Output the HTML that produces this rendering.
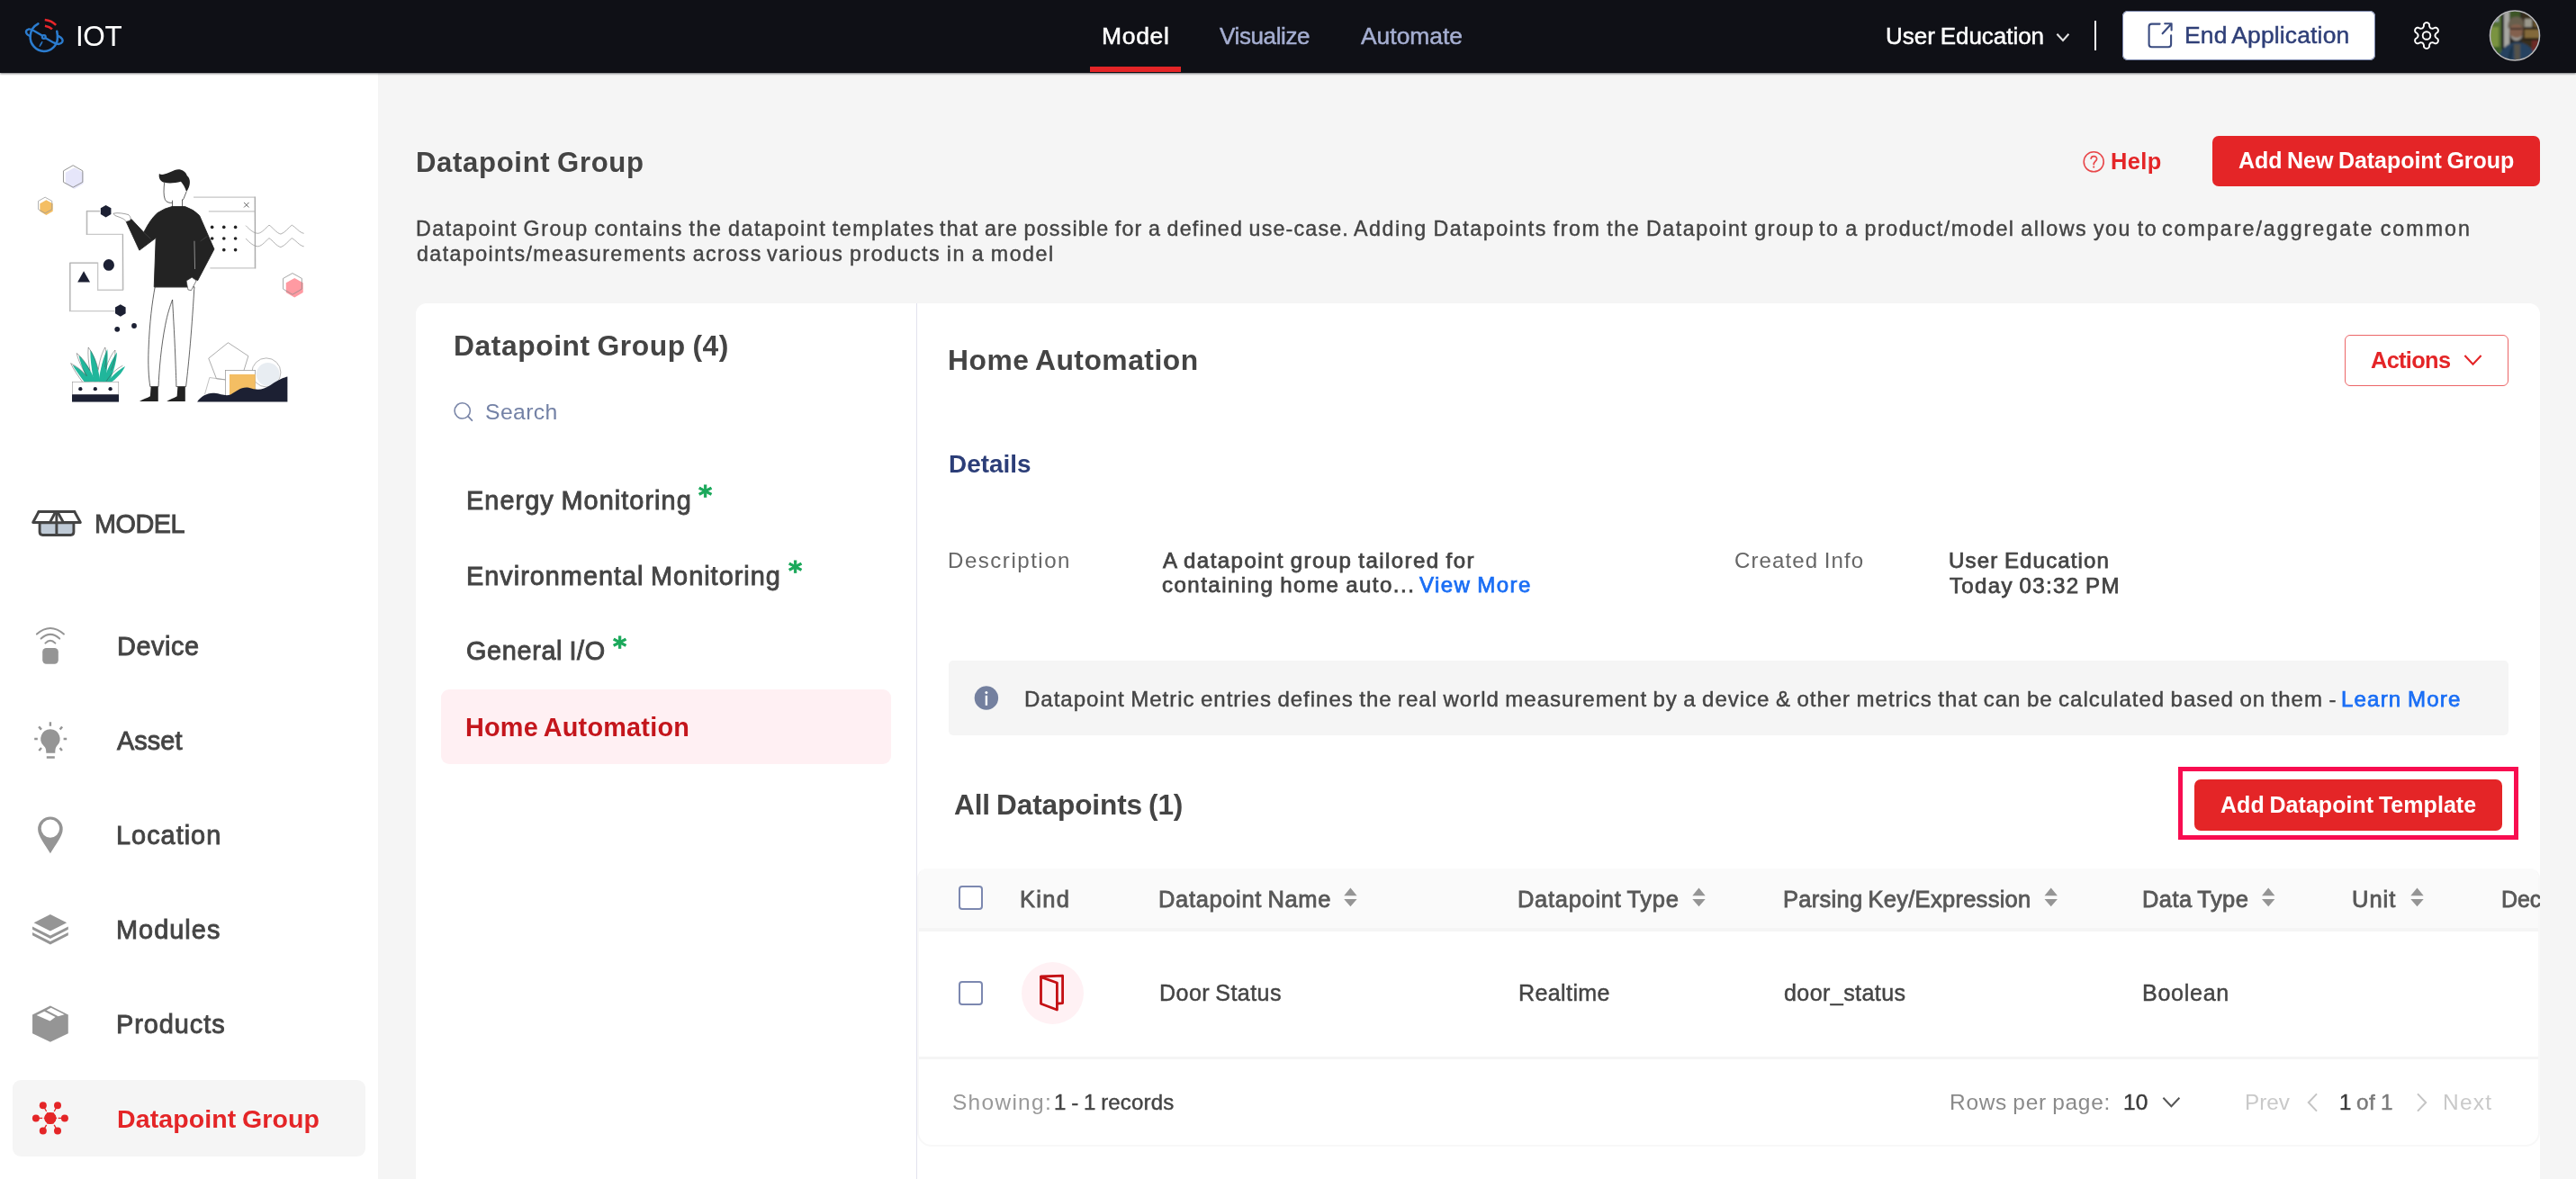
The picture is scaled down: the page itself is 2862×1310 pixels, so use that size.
<!DOCTYPE html><html lang="en"><head><meta charset="utf-8"><title>IOT - Datapoint Group</title><style>
html,body{margin:0;padding:0;background:#f5f5f5;}
body{width:2862px;height:1310px;overflow:hidden;font-family:"Liberation Sans",Arial,sans-serif;}
#root{position:relative;width:2862px;height:1310px;overflow:hidden;background:#f5f5f5;}
.a{position:absolute;}
.t{position:absolute;white-space:nowrap;line-height:1;will-change:transform;}
svg{position:absolute;overflow:visible;}

</style></head><body><div id="root">
<!-- main surfaces -->
<div class="a" style="left:0;top:81px;width:420px;height:1229px;background:#fff;"></div>
<div class="a" style="left:0;top:0;width:2862px;height:80.6px;background:#0f1016;box-shadow:0 0.5px 2px rgba(15,16,22,.55);"></div>
<div class="a" style="left:1211px;top:73.6px;width:101px;height:6px;background:#e42527;"></div>
<!-- header right -->
<div class="a" style="left:2327px;top:23px;width:2.2px;height:33px;background:#fff;"></div>
<div class="a" style="left:2358px;top:12px;width:281px;height:54.5px;background:#fff;border-radius:6px;box-shadow:inset 0 0 0 1px #7a86ad;"></div>
<!-- sidebar selected -->
<div class="a" style="left:14px;top:1200px;width:392px;height:85px;background:#f5f5f5;border-radius:9px;"></div>
<!-- top-right button -->
<div class="a" style="left:2458px;top:151px;width:364px;height:56px;background:#e42527;border-radius:7px;"></div>
<!-- card -->
<div class="a" style="left:462px;top:337px;width:2360px;height:1000px;background:#fff;border-radius:12px;"></div>
<div class="a" style="left:1017.7px;top:337px;width:1.4px;height:973px;background:#e2e2ee;"></div>
<div class="a" style="left:490px;top:766px;width:500px;height:83px;background:#fff0f3;border-radius:9px;"></div>
<!-- actions -->
<div class="a" style="left:2605px;top:372px;width:182px;height:57px;box-sizing:border-box;border:1.6px solid #ec6668;border-radius:6px;background:#fff;"></div>
<!-- info banner -->
<div class="a" style="left:1054px;top:734px;width:1733px;height:83px;background:#f5f5f5;border-radius:5px;"></div>
<!-- highlight + button -->
<div class="a" style="left:2420px;top:852px;width:378px;height:81px;box-sizing:border-box;border:5px solid #f80d50;"></div>
<div class="a" style="left:2438px;top:866px;width:342.2px;height:56.5px;background:#e42527;border-radius:7px;"></div>
<!-- table -->
<div class="a" style="left:1019px;top:964.5px;width:1803px;height:309.5px;border:2px solid #f8f8f8;border-top:0;border-radius:11px 11px 16px 16px;box-sizing:border-box;background:#fff;overflow:hidden;">
  <div class="a" style="left:-2px;top:0;width:1834px;height:66.5px;background:#fafafa;"></div>
  <div class="a" style="left:-2px;top:66.5px;width:1834px;height:4px;background:#f5f5f5;"></div>
  <div class="a" style="left:-2px;top:209px;width:1834px;height:3.6px;background:#f5f5f5;"></div>
</div>
<!-- checkboxes -->
<div class="a" style="left:1065px;top:984px;width:23px;height:23px;border:2px solid #7c88b0;border-radius:4px;background:#fff;"></div>
<div class="a" style="left:1065px;top:1090px;width:23px;height:23px;border:2px solid #7c88b0;border-radius:4px;background:#fff;"></div>
<div class="a" style="left:1134.5px;top:1069px;width:69px;height:69px;border-radius:50%;background:#fff1f4;"></div>

<!-- sidebar illustration -->
<svg style="left:0;top:150px" width="440" height="360" viewBox="0 150 440 360">
<g transform="translate(30 170) scale(0.15267)">
  <!-- hexagons -->
  <polygon points="345,107 410,143 410,222 345,262 280,222 280,143" fill="#e6e6fa"/>
  <polygon points="335,90 405,130 405,212 335,250 265,212 265,130" fill="none" stroke="#8a8a8a" stroke-width="6"/>
  <polygon points="140,342 188,368 188,424 140,452 94,424 94,368" fill="#f4be63"/>
  <polygon points="132,322 182,350 182,410 132,438 82,410 82,350" fill="none" stroke="#9a9a9a" stroke-width="5"/>
  <!-- connector lines -->
  <path d="M530,425 L437,425 L437,592 L697,592 L697,997 L515,997 L515,800 L315,800 L315,1150 L640,1150" fill="none" stroke="#c9c9c9" stroke-width="9" stroke-linejoin="miter"/>
  <path d="M530,421 L433,421 L433,596 M697,592 L701,997 M515,800 L311,800 L311,1154" fill="none" stroke="#8c8c8c" stroke-width="3"/>
  <polygon points="574,380 612,402 612,446 574,468 536,446 536,402" fill="#1c2033"/>
  <ellipse cx="595" cy="815" rx="40" ry="42" fill="#1c2033"/>
  <polygon points="413,860 459,940 368,940" fill="#1c2033"/>
  <polygon points="680,1102 718,1124 718,1168 680,1190 642,1168 642,1124" fill="#1c2033"/>
</g>
<g transform="translate(170 170) scale(0.15267)">
  <!-- window -->
  <path d="M295,322 L742,322 L742,838 L415,838 M405,425 L742,425" fill="none" stroke="#c6c6c6" stroke-width="9"/>
  <path d="M742,318 L746,842" fill="none" stroke="#777" stroke-width="3"/>
  <path d="M662,360 L698,396 M698,360 L662,396" stroke="#555" stroke-width="6" fill="none"/>
  <g fill="#222"><circle cx="430" cy="540" r="12"/><circle cx="516" cy="540" r="12"/><circle cx="600" cy="540" r="12"/>
  <circle cx="430" cy="622" r="12"/><circle cx="516" cy="622" r="12"/><circle cx="600" cy="622" r="12"/>
  <circle cx="516" cy="705" r="12"/><circle cx="600" cy="705" r="12"/></g>
  <path d="M675,528 C 705,560 735,585 765,585 C 795,580 820,545 845,525 C 870,540 900,585 930,590 C 960,580 985,545 1010,525 C 1040,540 1065,580 1098,585" fill="none" stroke="#999" stroke-width="5"/>
  <path d="M675,623 C 705,655 735,680 765,680 C 795,675 820,640 845,620 C 870,635 900,680 930,685 C 960,675 985,640 1010,620 C 1040,635 1065,675 1098,680" fill="none" stroke="#999" stroke-width="5"/>
  <!-- pink hex -->
  <polygon points="1030,910 1092,945 1092,1015 1030,1052 968,1015 968,945" fill="#ff9aa2"/>
  <polygon points="1015,875 1083,913 1083,990 1015,1030 947,990 947,913" fill="none" stroke="#8a8a8a" stroke-width="5"/>
</g>
<g transform="translate(60 320) scale(0.15267)">
  <!-- small dots -->
  <circle cx="460" cy="300" r="19" fill="#1c2033"/><circle cx="583" cy="275" r="19" fill="#1c2033"/>
  <!-- plant -->
  <g fill="#21b69b">
    <path d="M225,690 C 190,640 150,590 135,560 C 180,580 230,620 262,685 Z"/>
    <path d="M250,685 C 215,610 190,540 180,490 C 225,530 270,600 300,680 Z"/>
    <path d="M290,685 C 275,600 262,510 265,450 C 300,500 325,590 335,680 Z"/>
    <path d="M325,685 C 335,590 360,500 388,445 C 395,520 385,610 372,685 Z"/>
    <path d="M355,685 C 385,600 420,520 458,468 C 455,540 430,620 400,685 Z"/>
    <path d="M385,690 C 420,640 470,595 518,570 C 495,620 450,665 410,690 Z"/>
  </g>
  <g fill="none" stroke="#444" stroke-width="3">
    <path d="M212,690 C 175,640 140,590 122,548 C 165,570 205,600 235,640"/>
    <path d="M240,640 C 200,580 175,520 165,475 C 200,500 235,550 260,600"/>
    <path d="M262,600 C 250,540 245,480 250,432 C 285,480 310,540 320,590"/>
    <path d="M322,600 C 330,530 350,470 372,432 C 385,480 380,530 370,575"/>
    <path d="M375,590 C 395,530 420,480 445,452 C 448,500 435,550 415,600"/>
    <path d="M380,680 C 410,630 450,590 500,565"/>
  </g>
  <rect x="133" y="683" width="337" height="92" fill="#fff" stroke="#999" stroke-width="4"/>
  <rect x="131" y="775" width="341" height="54" fill="#1c2033"/>
  <circle cx="192" cy="735" r="14" fill="#1c2033"/><circle cx="300" cy="735" r="14" fill="#1c2033"/><circle cx="410" cy="735" r="14" fill="#1c2033"/>
  <!-- legs -->
  <path d="M735,-8 C 715,100 695,250 688,450 C 684,550 688,650 700,718 L760,718 C 765,600 780,420 810,270 C 825,190 845,130 862,85 C 868,200 880,400 885,560 C 888,640 890,690 890,718 L960,718 C 975,600 1000,350 1020,10 L1022,-8 Z" fill="#fff" stroke="#333" stroke-width="5"/>
  <path d="M705,718 L758,718 L758,826 L622,826 C 640,812 680,800 700,788 Z" fill="#222"/>
  <path d="M900,718 L955,718 L955,826 L820,826 C 840,812 875,800 895,788 Z" fill="#222"/>
</g>
<g transform="translate(200 320) scale(0.15267)">
  <polygon points="350,398 497,495 440,680 265,660 208,512" fill="#fff" stroke="#777" stroke-width="4"/>
  <path d="M180,775 L215,652 L335,668" fill="none" stroke="#999" stroke-width="4"/>
  <circle cx="628" cy="615" r="105" fill="#fff" stroke="#888" stroke-width="4"/>
  <circle cx="640" cy="628" r="84" fill="#e8edf2"/>
  <rect x="330" y="600" width="218" height="200" fill="#fff" stroke="#999" stroke-width="5"/>
  <rect x="360" y="628" width="188" height="170" fill="#f4be63"/>
  <path d="M125,829 C 150,790 200,760 250,765 C 300,770 330,790 370,775 C 410,750 450,715 500,725 C 560,745 600,745 660,705 C 720,665 760,650 782,645 L782,829 Z" fill="#1c2033"/>
</g>
<g transform="translate(30 170) scale(0.15267)">
  <!-- person upper body -->
  <path d="M1000,215 C 995,260 992,310 1005,340 C 1015,360 1040,365 1058,362 M1160,282 L1140,332 L1130,345 M1058,345 L1058,395 M1130,338 L1130,395" fill="none" stroke="#333" stroke-width="5"/>
  <path d="M962,150 C 985,170 1040,140 1075,125 C 1110,112 1150,125 1165,165 C 1195,190 1190,240 1160,282 C 1150,250 1135,225 1120,208 C 1080,220 1030,222 1000,215 C 975,210 955,185 962,150 Z" fill="#222"/>
  <path d="M1055,390 L1150,390 Q1215,412 1255,455 L1362,700 L1242,928 L1200,905 L1170,940 L1170,975 L925,975 L938,618 L818,708 L722,500 L760,482 L850,578 Q900,478 950,436 Q1000,402 1055,390 Z" fill="#232323" stroke="#232323" stroke-width="6" stroke-linejoin="round"/>
  <path d="M1218,640 L1222,845" stroke="#e8e8e8" stroke-width="3.5" fill="none"/>
  <path d="M850,578 L900,625 M1262,642 L1312,606" stroke="#5a5a5a" stroke-width="3" fill="none"/>
  <path d="M628,440 C 660,432 710,440 740,450 C 755,465 758,480 750,490 L722,500 C 715,480 680,470 640,455 Z" fill="#fff" stroke="#666" stroke-width="4"/>
  <path d="M1160,930 L1200,905 L1232,930 L1195,1000 L1172,995 L1165,960 Z" fill="#fff" stroke="#333" stroke-width="4"/>
</g>
</svg>

<svg style="left:0;top:0" width="2862" height="1310" viewBox="0 0 2862 1310">
<g transform="translate(20 10) scale(0.05089)" fill="none" stroke-linecap="round">
<path d="M440,322 C 350,370 275,470 268,590 C 255,760 390,920 565,922 C 730,922 860,790 862,640 C 864,580 860,530 850,488" stroke="#2b7ccf" stroke-width="50"/>
<path d="M268,592 C 170,560 140,470 230,442 C 270,432 300,448 340,470 L 528,580" stroke="#2b7ccf" stroke-width="46"/>
<path d="M608,640 L 780,735 C 850,770 930,780 968,720 C 990,670 940,620 885,592" stroke="#2b7ccf" stroke-width="46"/>
<circle cx="565" cy="608" r="38" stroke="#2b7ccf" stroke-width="44"/>
<path d="M522,715 C 500,740 475,790 470,822 C 495,800 520,760 530,722 Z" fill="#2b7ccf" stroke="#2b7ccf" stroke-width="16" stroke-linejoin="round"/>
<path d="M585,238 C 680,250 770,290 828,352" stroke="#e8262b" stroke-width="50" stroke-linecap="butt"/>
<path d="M588,368 C 650,378 705,400 745,442" stroke="#e8262b" stroke-width="50" stroke-linecap="butt"/>
</g>
<path d="M2285.4,37.8 L2292,45 L2298.4,37.8" fill="none" stroke="#e2e2e2" stroke-width="2.1"/>
<path d="M2399.6,26.6 H2390.6 Q2387.6,26.6 2387.6,29.6 V49.2 Q2387.6,52.2 2390.6,52.2 H2409.1 Q2412.1,52.2 2412.1,49.2 V39.4 M2402.6,37.3 L2412.2,26.8 M2405.2,26.2 H2412.6 V33.4" fill="none" stroke="#3a4b80" stroke-width="2.1" stroke-linecap="round" stroke-linejoin="round"/>
<path d="M2705.40,39.50 L2705.42,39.83 L2705.50,40.16 L2705.62,40.51 L2705.80,40.88 L2706.04,41.27 L2706.36,41.70 L2706.85,42.20 L2708.13,42.98 L2708.56,43.58 L2708.79,44.15 L2708.89,44.71 L2708.90,45.25 L2708.83,45.76 L2708.69,46.25 L2708.47,46.70 L2708.19,47.11 L2707.84,47.48 L2707.43,47.80 L2706.96,48.06 L2706.42,48.25 L2705.82,48.34 L2705.08,48.27 L2703.76,47.54 L2703.09,47.37 L2702.55,47.31 L2702.09,47.30 L2701.69,47.33 L2701.32,47.39 L2701.00,47.50 L2700.70,47.64 L2700.43,47.83 L2700.17,48.06 L2699.94,48.34 L2699.71,48.68 L2699.49,49.08 L2699.27,49.57 L2699.08,50.25 L2699.05,51.75 L2698.75,52.42 L2698.36,52.90 L2697.94,53.27 L2697.48,53.55 L2697.00,53.74 L2696.50,53.86 L2696.00,53.90 L2695.50,53.86 L2695.00,53.74 L2694.52,53.55 L2694.06,53.27 L2693.64,52.90 L2693.25,52.42 L2692.95,51.75 L2692.92,50.25 L2692.73,49.57 L2692.51,49.08 L2692.29,48.68 L2692.06,48.34 L2691.83,48.06 L2691.57,47.83 L2691.30,47.64 L2691.00,47.50 L2690.68,47.39 L2690.31,47.33 L2689.91,47.30 L2689.45,47.31 L2688.91,47.37 L2688.24,47.54 L2686.92,48.27 L2686.18,48.34 L2685.58,48.25 L2685.04,48.06 L2684.57,47.80 L2684.16,47.48 L2683.81,47.11 L2683.53,46.70 L2683.31,46.25 L2683.17,45.76 L2683.10,45.25 L2683.11,44.71 L2683.21,44.15 L2683.44,43.58 L2683.87,42.98 L2685.15,42.20 L2685.64,41.70 L2685.96,41.27 L2686.20,40.88 L2686.38,40.51 L2686.50,40.16 L2686.58,39.83 L2686.60,39.50 L2686.58,39.17 L2686.50,38.84 L2686.38,38.49 L2686.20,38.12 L2685.96,37.73 L2685.64,37.30 L2685.15,36.80 L2683.87,36.02 L2683.44,35.42 L2683.21,34.85 L2683.11,34.29 L2683.10,33.75 L2683.17,33.24 L2683.31,32.75 L2683.53,32.30 L2683.81,31.89 L2684.16,31.52 L2684.57,31.20 L2685.04,30.94 L2685.58,30.75 L2686.18,30.66 L2686.92,30.73 L2688.24,31.46 L2688.91,31.63 L2689.45,31.69 L2689.91,31.70 L2690.31,31.67 L2690.68,31.61 L2691.00,31.50 L2691.30,31.36 L2691.57,31.17 L2691.83,30.94 L2692.06,30.66 L2692.29,30.32 L2692.51,29.92 L2692.73,29.43 L2692.92,28.75 L2692.95,27.25 L2693.25,26.58 L2693.64,26.10 L2694.06,25.73 L2694.52,25.45 L2695.00,25.26 L2695.50,25.14 L2696.00,25.10 L2696.50,25.14 L2697.00,25.26 L2697.48,25.45 L2697.94,25.73 L2698.36,26.10 L2698.75,26.58 L2699.05,27.25 L2699.08,28.75 L2699.27,29.43 L2699.49,29.92 L2699.71,30.32 L2699.94,30.66 L2700.17,30.94 L2700.43,31.17 L2700.70,31.36 L2701.00,31.50 L2701.32,31.61 L2701.69,31.67 L2702.09,31.70 L2702.55,31.69 L2703.09,31.63 L2703.76,31.46 L2705.08,30.73 L2705.82,30.66 L2706.42,30.75 L2706.96,30.94 L2707.43,31.20 L2707.84,31.52 L2708.19,31.89 L2708.47,32.30 L2708.69,32.75 L2708.83,33.24 L2708.90,33.75 L2708.89,34.29 L2708.79,34.85 L2708.56,35.42 L2708.13,36.02 L2706.85,36.80 L2706.36,37.30 L2706.04,37.73 L2705.80,38.12 L2705.62,38.49 L2705.50,38.84 L2705.42,39.17Z" fill="none" stroke="#fff" stroke-width="1.9" stroke-linejoin="round"/>
<circle cx="2696" cy="39.5" r="4.3" fill="none" stroke="#fff" stroke-width="1.9"/>
<defs><clipPath id="av"><circle cx="2794" cy="39.5" r="27"/></clipPath><filter id="avb" x="-10%" y="-10%" width="120%" height="120%"><feGaussianBlur stdDeviation="0.9"/></filter></defs>
<g clip-path="url(#av)"><g filter="url(#avb)">
<rect x="2760" y="5" width="70" height="70" fill="#33302a"/>
<rect x="2760" y="5" width="20" height="70" fill="#6f9338"/>
<rect x="2762" y="8" width="14" height="16" fill="#cfe2e6"/>
<rect x="2766" y="30" width="10" height="24" fill="#a4c450"/>
<rect x="2764" y="52" width="14" height="18" fill="#4d7a2a"/>
<rect x="2779" y="5" width="3" height="70" fill="#1e2124"/>
<rect x="2782" y="5" width="6" height="48" fill="#e2dfd6"/>
<rect x="2788" y="5" width="12" height="16" fill="#4f6d2d"/>
<rect x="2802" y="12" width="28" height="50" fill="#4a3820"/>
<rect x="2805" y="21" width="8" height="9" fill="#d2ccb8"/><rect x="2815" y="20" width="8" height="10" fill="#8d6a30"/>
<rect x="2805" y="33" width="17" height="9" fill="#b18a46"/><rect x="2813" y="45" width="8" height="14" fill="#93342b"/>
<rect x="2803" y="30.5" width="22" height="1.6" fill="#2a1f12"/><rect x="2803" y="43" width="22" height="1.6" fill="#2a1f12"/>
<path d="M2774,72 C2776,56 2784,49 2794,47 C2806,46 2816,52 2820,72 Z" fill="#31557a"/>
<path d="M2786,72 C2786,60 2789,52 2793,49 L2790,72 Z" fill="#25415f"/>
<path d="M2793,49 L2800,49 L2800,72 L2794,72 Z" fill="#716b5e"/>
<ellipse cx="2795.5" cy="34.5" rx="7.4" ry="10.4" fill="#b07f60"/>
<path d="M2786.5,32 C2785.5,22 2790.5,18.5 2796,18.5 C2802.5,18.5 2805.5,24 2804,32 C2801.5,26 2791.5,25 2786.5,32 Z" fill="#8b7a62"/>
<path d="M2789,38.5 C2790.5,47.5 2801,47.5 2802.8,38.5 C2800,43 2792.5,43 2789,38.5 Z" fill="#d0cabf"/>
<rect x="2789" y="31.4" width="12.8" height="1.5" fill="#2c2622"/>
<rect x="2760" y="5" width="70" height="70" fill="#10141c" opacity="0.28"/>
</g></g>
<circle cx="2794" cy="39.5" r="27.5" fill="none" stroke="#b9b9bb" stroke-width="1.6"/>
<g transform="translate(20 545) scale(0.085404)" stroke="#444" stroke-width="34" stroke-linejoin="round" stroke-linecap="round">
<path d="M282,418 V540 Q282,580 322,580 H685 Q725,580 725,540 V418 Z" fill="#bfcad6"/>
<path d="M270,275 H490 L415,415 H195 Z" fill="#fff"/>
<path d="M512,275 H735 L812,415 H590 Z" fill="#fff"/>
<path d="M270,275 H735 M502,280 V580" fill="none"/>
</g>
<rect x="47.2" y="720" width="17.6" height="17.8" rx="4.2" fill="#959595"/>
<path d="M40.9,704.6 Q55.9,691.5 70.9,704.6 M45.6,709.6 Q55.9,700.2 66.2,709.6 M50.4,714.6 Q55.9,709 61.4,714.6" fill="none" stroke="#959595" stroke-width="2" stroke-linecap="round"/>
<path d="M55.9,810.2 A10.7,10.7 0 0 1 63.2,828.7 C61.6,830.6 61.3,833 61.3,836.8 H51.3 C51.3,833 50.9,830.6 48.6,828.7 A10.7,10.7 0 0 1 55.9,810.2 Z" fill="#959595"/>
<path d="M51.8,841.5 H60.8 M55.9,802.3 V806.8 M38.2,821 H41.8 M70.6,821 H74.2 M43.1,807.4 L46,810.6 M69.1,807.4 L66.6,810.6 M43.3,834 L46,831 M68.9,834 L66.6,831" stroke="#959595" stroke-width="2.4" fill="none"/>
<path fill-rule="evenodd" d="M55.9,907.4 A13.8,13.8 0 0 1 69.7,921.2 C69.7,929 62,938 55.9,948.2 C49.8,938 42.1,929 42.1,921.2 A13.8,13.8 0 0 1 55.9,907.4 Z M55.9,910.4 A10.2,10.2 0 1 0 55.9,930.8 A10.2,10.2 0 1 0 55.9,910.4 Z" fill="#959595"/>
<path d="M55.9,1016 L74.2,1025.2 L55.9,1034.4 L37.6,1025.2 Z" fill="#959595"/>
<path d="M36,1029.6 L55.9,1039.5 L75.8,1029.6 V1032.8 L55.9,1042.9 L36,1032.8 Z M36,1036 L55.9,1046 L75.8,1036 V1039.2 L55.9,1049.4 L36,1039.2 Z" fill="#959595"/>
<g transform="translate(20 1100) scale(0.152788)">
<path d="M235,115 L365,180 V315 L235,378 L105,315 V180 Z" fill="#959595"/>
<path d="M135,183 L192,155 L272,196 L233,226 Z M207,148 L240,130 L338,178 L292,192 Z" fill="#fff"/>
</g>
<circle cx="55.9" cy="1242.4" r="6.5" fill="#e42527"/>
<circle cx="47.8" cy="1228.3" r="4" fill="#e42527"/>
<path d="M55.9,1242.4 L47.8,1228.3" stroke="#e42527" stroke-width="1.3"/>
<circle cx="64" cy="1228.3" r="4" fill="#e42527"/>
<path d="M55.9,1242.4 L64,1228.3" stroke="#e42527" stroke-width="1.3"/>
<circle cx="39.9" cy="1242.4" r="4" fill="#e42527"/>
<path d="M55.9,1242.4 L39.9,1242.4" stroke="#e42527" stroke-width="1.3"/>
<circle cx="71.9" cy="1242.4" r="4" fill="#e42527"/>
<path d="M55.9,1242.4 L71.9,1242.4" stroke="#e42527" stroke-width="1.3"/>
<circle cx="47.8" cy="1256.6" r="4" fill="#e42527"/>
<path d="M55.9,1242.4 L47.8,1256.6" stroke="#e42527" stroke-width="1.3"/>
<circle cx="64" cy="1256.6" r="4" fill="#e42527"/>
<path d="M55.9,1242.4 L64,1256.6" stroke="#e42527" stroke-width="1.3"/>
<circle cx="55.9" cy="1242.4" r="8" fill="none" stroke="#f5f5f5" stroke-width="1.6"/>
<circle cx="55.9" cy="1242.4" r="6.5" fill="#e42527"/>
<circle cx="2326.2" cy="179.8" r="11" fill="none" stroke="#e8474a" stroke-width="1.6"/>
<path d="M2323.2,176.2 C2323.4,173 2329.6,172.6 2329.6,176.4 C2329.6,179 2326.3,179.4 2326.2,182.6" fill="none" stroke="#e8474a" stroke-width="1.7" stroke-linecap="round"/><circle cx="2326.2" cy="185.6" r="1.1" fill="#e8474a"/>
<circle cx="513.7" cy="456.4" r="8.6" fill="none" stroke="#7a86a8" stroke-width="1.6"/><path d="M519.8,462.4 L524.4,467.2" stroke="#7a86a8" stroke-width="1.8" stroke-linecap="round"/>
<path d="M2738.4,395 L2747.5,404.8 L2756.6,395" fill="none" stroke="#e42527" stroke-width="2.1"/>
<circle cx="1095.9" cy="775.5" r="13.2" fill="#74809f"/><circle cx="1095.9" cy="769.6" r="1.5" fill="#fff"/><rect x="1094.7" y="772.8" width="2.4" height="11" fill="#fff"/>
<path d="M1500.4,986.5 L1507.6,995.2 H1493.2 Z M1500.4,1007.3 L1507.6,998.9 H1493.2 Z" fill="#959595"/>
<path d="M1887.5,986.5 L1894.7,995.2 H1880.3 Z M1887.5,1007.3 L1894.7,998.9 H1880.3 Z" fill="#959595"/>
<path d="M2278.7,986.5 L2285.9,995.2 H2271.5 Z M2278.7,1007.3 L2285.9,998.9 H2271.5 Z" fill="#959595"/>
<path d="M2520.2,986.5 L2527.4,995.2 H2513.0 Z M2520.2,1007.3 L2527.4,998.9 H2513.0 Z" fill="#959595"/>
<path d="M2685.5,986.5 L2692.7,995.2 H2678.3 Z M2685.5,1007.3 L2692.7,998.9 H2678.3 Z" fill="#959595"/>
<path d="M1156.5,1085.6 L1174.4,1092 V1122 L1156.5,1115.2 Z" fill="none" stroke="#c41014" stroke-width="2.8" stroke-linejoin="round"/>
<path d="M1156.5,1085 L1180.6,1084.2 V1114.6 L1175.6,1115" fill="none" stroke="#c41014" stroke-width="2.8" stroke-linejoin="round" stroke-linecap="round"/>
<path d="M2403.4,1219.8 L2412.4,1229.2 L2421.4,1219.8" fill="none" stroke="#555" stroke-width="2"/>
<path d="M2574,1215.4 L2564.8,1225 L2574,1234.6" fill="none" stroke="#c4c4c4" stroke-width="2"/>
<path d="M2686,1215.4 L2695.2,1225 L2686,1234.6" fill="none" stroke="#c4c4c4" stroke-width="2"/>
</svg>
<span class="t" style="left:84.04px;top:25.00px;font-size:31.500px;color:#fff;letter-spacing:-0.438px;">IOT</span>
<span class="t" style="left:1223.93px;top:27.00px;font-size:26.520px;color:#fff;-webkit-text-stroke:0.48px #fff;letter-spacing:0.647px;">Model</span>
<span class="t" style="left:1354.50px;top:27.00px;font-size:26.000px;color:#a5aed1;-webkit-text-stroke:0.47px #a5aed1;letter-spacing:-0.378px;">Visualize</span>
<span class="t" style="left:1512.00px;top:27.00px;font-size:26.417px;color:#a5aed1;-webkit-text-stroke:0.48px #a5aed1;">Automate</span>
<span class="t" style="left:2095.38px;top:27.00px;font-size:26.000px;color:#fff;-webkit-text-stroke:0.47px #fff;letter-spacing:-0.029px;word-spacing:-1.300px;">User Education</span>
<span class="t" style="left:2427.23px;top:26.00px;font-size:26.442px;color:#2f3f78;-webkit-text-stroke:0.48px #2f3f78;letter-spacing:0.163px;word-spacing:-1.322px;">End Application</span>
<span class="t" style="left:104.75px;top:568.00px;font-size:28.800px;color:#444;-webkit-text-stroke:0.89px #444;letter-spacing:-0.487px;">MODEL</span>
<span class="t" style="left:130.00px;top:704.00px;font-size:28.866px;color:#444;-webkit-text-stroke:0.89px #444;letter-spacing:0.586px;">Device</span>
<span class="t" style="left:130.20px;top:809.00px;font-size:28.866px;color:#444;-webkit-text-stroke:0.89px #444;letter-spacing:0.077px;">Asset</span>
<span class="t" style="left:128.84px;top:914.00px;font-size:28.866px;color:#444;-webkit-text-stroke:0.89px #444;letter-spacing:1.017px;">Location</span>
<span class="t" style="left:129.24px;top:1019.00px;font-size:28.866px;color:#444;-webkit-text-stroke:0.89px #444;letter-spacing:1.042px;">Modules</span>
<span class="t" style="left:129.24px;top:1124.00px;font-size:28.866px;color:#444;-webkit-text-stroke:0.89px #444;letter-spacing:0.963px;">Products</span>
<span class="t" style="left:129.62px;top:1229.00px;font-size:28.526px;color:#e42527;font-weight:700;letter-spacing:0.102px;word-spacing:-1.426px;">Datapoint Group</span>
<span class="t" style="left:462.06px;top:165.00px;font-size:31.110px;color:#444;font-weight:700;letter-spacing:0.651px;word-spacing:-1.556px;">Datapoint Group</span>
<span class="t" style="left:2345.15px;top:167.00px;font-size:25.437px;color:#e42527;font-weight:700;letter-spacing:0.373px;">Help</span>
<span class="t" style="left:2487.41px;top:166.00px;font-size:25.000px;color:#fff;font-weight:700;letter-spacing:-0.050px;word-spacing:-1.250px;">Add New Datapoint Group</span>
<span class="t" style="left:461.71px;top:243.00px;font-size:23.256px;color:#444;-webkit-text-stroke:0.42px #444;letter-spacing:1.478px;word-spacing:-1.163px;">Datapoint Group contains the datapoint templates</span>
<span class="t" style="left:1043.94px;top:243.00px;font-size:23.256px;color:#444;-webkit-text-stroke:0.42px #444;letter-spacing:1.179px;word-spacing:-1.163px;">that are possible for a defined use-case.</span>
<span class="t" style="left:1503.50px;top:243.00px;font-size:23.256px;color:#444;-webkit-text-stroke:0.42px #444;letter-spacing:1.535px;word-spacing:-1.163px;">Adding Datapoints from the Datapoint group</span>
<span class="t" style="left:2021.00px;top:243.00px;font-size:23.256px;color:#444;-webkit-text-stroke:0.42px #444;letter-spacing:1.517px;word-spacing:-1.163px;">to a product/model allows you to</span>
<span class="t" style="left:2401.67px;top:243.00px;font-size:23.256px;color:#444;-webkit-text-stroke:0.42px #444;letter-spacing:1.990px;word-spacing:-1.163px;">compare/aggregate common</span>
<span class="t" style="left:462.77px;top:271.00px;font-size:23.256px;color:#444;-webkit-text-stroke:0.42px #444;letter-spacing:1.413px;word-spacing:-1.163px;">datapoints/measurements across</span>
<span class="t" style="left:852.00px;top:271.00px;font-size:23.256px;color:#444;-webkit-text-stroke:0.42px #444;letter-spacing:1.477px;word-spacing:-1.163px;">various products in a model</span>
<span class="t" style="left:504.01px;top:369.00px;font-size:31.824px;color:#444;font-weight:700;letter-spacing:0.553px;word-spacing:-1.591px;">Datapoint Group (4)</span>
<span class="t" style="left:538.97px;top:446.00px;font-size:24.786px;color:#7482a6;letter-spacing:0.379px;">Search</span>
<span class="t" style="left:517.54px;top:542.00px;font-size:28.866px;color:#444;-webkit-text-stroke:0.89px #444;letter-spacing:1.060px;word-spacing:-1.443px;">Energy Monitoring</span>
<span class="t" style="left:517.54px;top:626.00px;font-size:28.866px;color:#444;-webkit-text-stroke:0.89px #444;letter-spacing:1.001px;word-spacing:-1.443px;">Environmental Monitoring</span>
<span class="t" style="left:517.95px;top:709.00px;font-size:28.866px;color:#444;-webkit-text-stroke:0.89px #444;letter-spacing:0.644px;word-spacing:-1.443px;">General I/O</span>
<span class="t" style="left:516.94px;top:794.00px;font-size:28.835px;color:#c4161c;font-weight:700;letter-spacing:0.223px;word-spacing:-1.442px;">Home Automation</span>
<span class="t" style="left:775.55px;top:536.30px;font-size:29.000px;color:#1aa85a;font-weight:700;-webkit-text-stroke:0.90px #1aa85a;font-family:'DejaVu Sans',sans-serif;">*</span>
<span class="t" style="left:876.17px;top:620.20px;font-size:29.000px;color:#1aa85a;font-weight:700;-webkit-text-stroke:0.90px #1aa85a;font-family:'DejaVu Sans',sans-serif;">*</span>
<span class="t" style="left:680.99px;top:704.40px;font-size:29.000px;color:#1aa85a;font-weight:700;-webkit-text-stroke:0.90px #1aa85a;font-family:'DejaVu Sans',sans-serif;">*</span>
<span class="t" style="left:1053.41px;top:385.00px;font-size:31.824px;color:#444;font-weight:700;letter-spacing:0.498px;word-spacing:-1.591px;">Home Automation</span>
<span class="t" style="left:2634.16px;top:388.00px;font-size:25.400px;color:#e42527;font-weight:700;letter-spacing:-0.683px;">Actions</span>
<span class="t" style="left:1053.66px;top:502.00px;font-size:27.894px;color:#2c3e78;font-weight:700;">Details</span>
<span class="t" style="left:1052.82px;top:611.00px;font-size:24.072px;color:#666;letter-spacing:1.513px;">Description</span>
<span class="t" style="left:1292.00px;top:611.00px;font-size:24.072px;color:#444;-webkit-text-stroke:0.75px #444;letter-spacing:1.423px;word-spacing:-1.204px;">A datapoint group tailored for</span>
<span class="t" style="left:1291.25px;top:638.00px;font-size:24.072px;color:#444;-webkit-text-stroke:0.75px #444;letter-spacing:1.458px;word-spacing:-1.204px;">containing home auto...</span>
<span class="t" style="left:1576.60px;top:638.00px;font-size:24.072px;color:#1a6ef5;-webkit-text-stroke:0.75px #1a6ef5;letter-spacing:1.413px;word-spacing:-1.204px;">View More</span>
<span class="t" style="left:1926.87px;top:611.00px;font-size:24.072px;color:#666;letter-spacing:1.075px;word-spacing:-1.204px;">Created Info</span>
<span class="t" style="left:2164.50px;top:611.00px;font-size:24.072px;color:#444;-webkit-text-stroke:0.75px #444;letter-spacing:1.129px;word-spacing:-1.204px;">User Education</span>
<span class="t" style="left:2165.62px;top:639.00px;font-size:24.072px;color:#444;-webkit-text-stroke:0.75px #444;letter-spacing:1.311px;word-spacing:-1.204px;">Today 03:32 PM</span>
<span class="t" style="left:1137.71px;top:765.00px;font-size:24.072px;color:#444;-webkit-text-stroke:0.43px #444;letter-spacing:0.969px;word-spacing:-1.204px;">Datapoint Metric entries defines the real world measurement by a device &amp; other metrics that can be calculated based on them -</span>
<span class="t" style="left:2600.62px;top:765.00px;font-size:24.072px;color:#1a6ef5;-webkit-text-stroke:0.75px #1a6ef5;letter-spacing:1.173px;word-spacing:-1.204px;">Learn More</span>
<span class="t" style="left:1059.71px;top:879.00px;font-size:31.600px;color:#444;font-weight:700;letter-spacing:-0.132px;word-spacing:-1.580px;">All Datapoints (1)</span>
<span class="t" style="left:2467.17px;top:882.00px;font-size:25.000px;color:#fff;font-weight:700;letter-spacing:0.045px;word-spacing:-1.250px;">Add Datapoint Template</span>
<span class="t" style="left:1133.01px;top:987.00px;font-size:25.500px;color:#585858;-webkit-text-stroke:0.79px #585858;letter-spacing:1.296px;">Kind</span>
<span class="t" style="left:1286.61px;top:987.00px;font-size:25.500px;color:#585858;-webkit-text-stroke:0.79px #585858;letter-spacing:0.649px;word-spacing:-1.275px;">Datapoint Name</span>
<span class="t" style="left:1686.01px;top:987.00px;font-size:25.500px;color:#585858;-webkit-text-stroke:0.79px #585858;letter-spacing:0.695px;word-spacing:-1.275px;">Datapoint Type</span>
<span class="t" style="left:1981.01px;top:987.00px;font-size:25.500px;color:#585858;-webkit-text-stroke:0.79px #585858;letter-spacing:0.276px;word-spacing:-1.275px;">Parsing Key/Expression</span>
<span class="t" style="left:2379.71px;top:987.00px;font-size:25.500px;color:#585858;-webkit-text-stroke:0.79px #585858;letter-spacing:0.416px;word-spacing:-1.275px;">Data Type</span>
<span class="t" style="left:2613.41px;top:987.00px;font-size:25.500px;color:#585858;-webkit-text-stroke:0.79px #585858;letter-spacing:0.986px;">Unit</span>
<span class="t" style="left:2779.05px;top:987.00px;font-size:25.000px;color:#585858;-webkit-text-stroke:0.78px #585858;letter-spacing:-0.057px;">Dec</span>
<span class="t" style="left:1287.54px;top:1091.00px;font-size:25.092px;color:#444;-webkit-text-stroke:0.45px #444;letter-spacing:0.431px;word-spacing:-1.255px;">Door Status</span>
<span class="t" style="left:1686.94px;top:1091.00px;font-size:25.092px;color:#444;-webkit-text-stroke:0.45px #444;letter-spacing:0.367px;">Realtime</span>
<span class="t" style="left:1982.22px;top:1091.00px;font-size:25.092px;color:#444;-webkit-text-stroke:0.45px #444;letter-spacing:0.405px;">door_status</span>
<span class="t" style="left:2380.04px;top:1091.00px;font-size:25.092px;color:#444;-webkit-text-stroke:0.45px #444;letter-spacing:0.714px;">Boolean</span>
<span class="t" style="left:1058.23px;top:1213.00px;font-size:24.480px;color:#999;letter-spacing:1.296px;">Showing:</span>
<span class="t" style="left:1170.70px;top:1213.00px;font-size:24.000px;color:#444;-webkit-text-stroke:0.43px #444;letter-spacing:0.178px;word-spacing:-1.200px;">1 - 1 records</span>
<span class="t" style="left:2166.09px;top:1213.00px;font-size:24.480px;color:#8a8a8a;letter-spacing:0.717px;word-spacing:-1.224px;">Rows per page:</span>
<span class="t" style="left:2358.87px;top:1213.00px;font-size:24.480px;color:#3a3a3a;-webkit-text-stroke:0.44px #3a3a3a;letter-spacing:0.210px;">10</span>
<span class="t" style="left:2493.90px;top:1213.00px;font-size:24.317px;color:#c9c9c9;">Prev</span>
<span class="t" style="left:2599.24px;top:1213.00px;font-size:24.000px;color:#3a3a3a;-webkit-text-stroke:0.43px #3a3a3a;">1</span>
<span class="t" style="left:2617.84px;top:1213.00px;font-size:24.308px;color:#7a7a7a;-webkit-text-stroke:0.44px #7a7a7a;letter-spacing:0.405px;word-spacing:-1.215px;">of 1</span>
<span class="t" style="left:2713.59px;top:1213.00px;font-size:24.480px;color:#c9c9c9;letter-spacing:1.251px;">Next</span>
<div class="a" style="left:2822px;top:337px;width:40px;height:973px;background:#f5f5f5;"></div>

</div></body></html>
